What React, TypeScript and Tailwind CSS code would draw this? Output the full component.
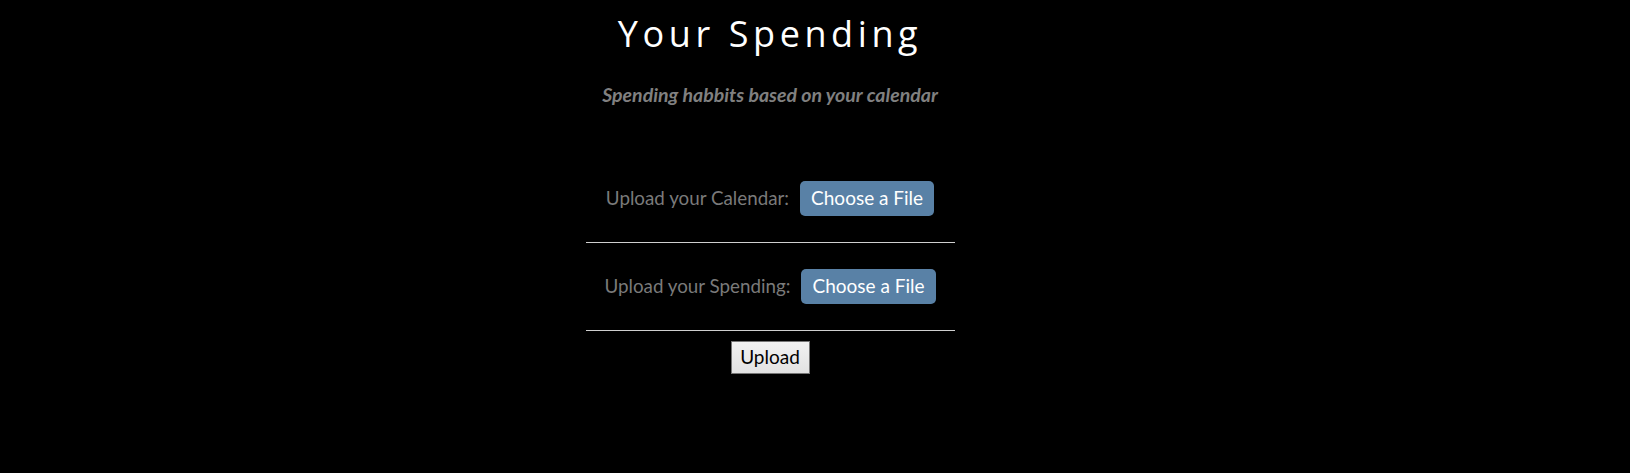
const FileRow = ({ label }: { label: string }) => {
  return (
    <div className="w-[369px] border-b border-[#cfcfcf] py-[26px] flex justify-center items-center gap-[11px]">
      <span className="text-[18.8px] text-[#7a7a7a]">{label}</span>
      <label className="h-[35px] px-[11px] flex items-center rounded-[5px] bg-[#5981a6] text-white text-[19px] cursor-pointer">
        Choose a File
        <input type="file" className="hidden" />
      </label>
    </div>
  );
};

const App = () => {
  return (
    <div className="min-h-[473px] w-full bg-black font-['Lato',sans-serif]">
      <div className="flex flex-col items-center pr-[90px]">
        <h1 className="mt-[12px] text-[36px] leading-[44px] tracking-[4.6px] text-white font-['Open_Sans',sans-serif] font-normal">
          Your Spending
        </h1>
        <p className="mt-[27px] text-[19.5px] leading-[23px] italic font-bold text-[#808080]">
          Spending habbits based on your calendar
        </p>
        <div className="mt-[49px] flex flex-col items-center">
          <FileRow label="Upload your Calendar:" />
          <FileRow label="Upload your Spending:" />
          <button className="mt-[10px] h-[33px] w-[79px] border border-[#767676] bg-gradient-to-b from-[#f2f2f2] to-[#e2e2e2] text-[19px] text-black">
            Upload
          </button>
        </div>
      </div>
    </div>
  );
};

export default App;
